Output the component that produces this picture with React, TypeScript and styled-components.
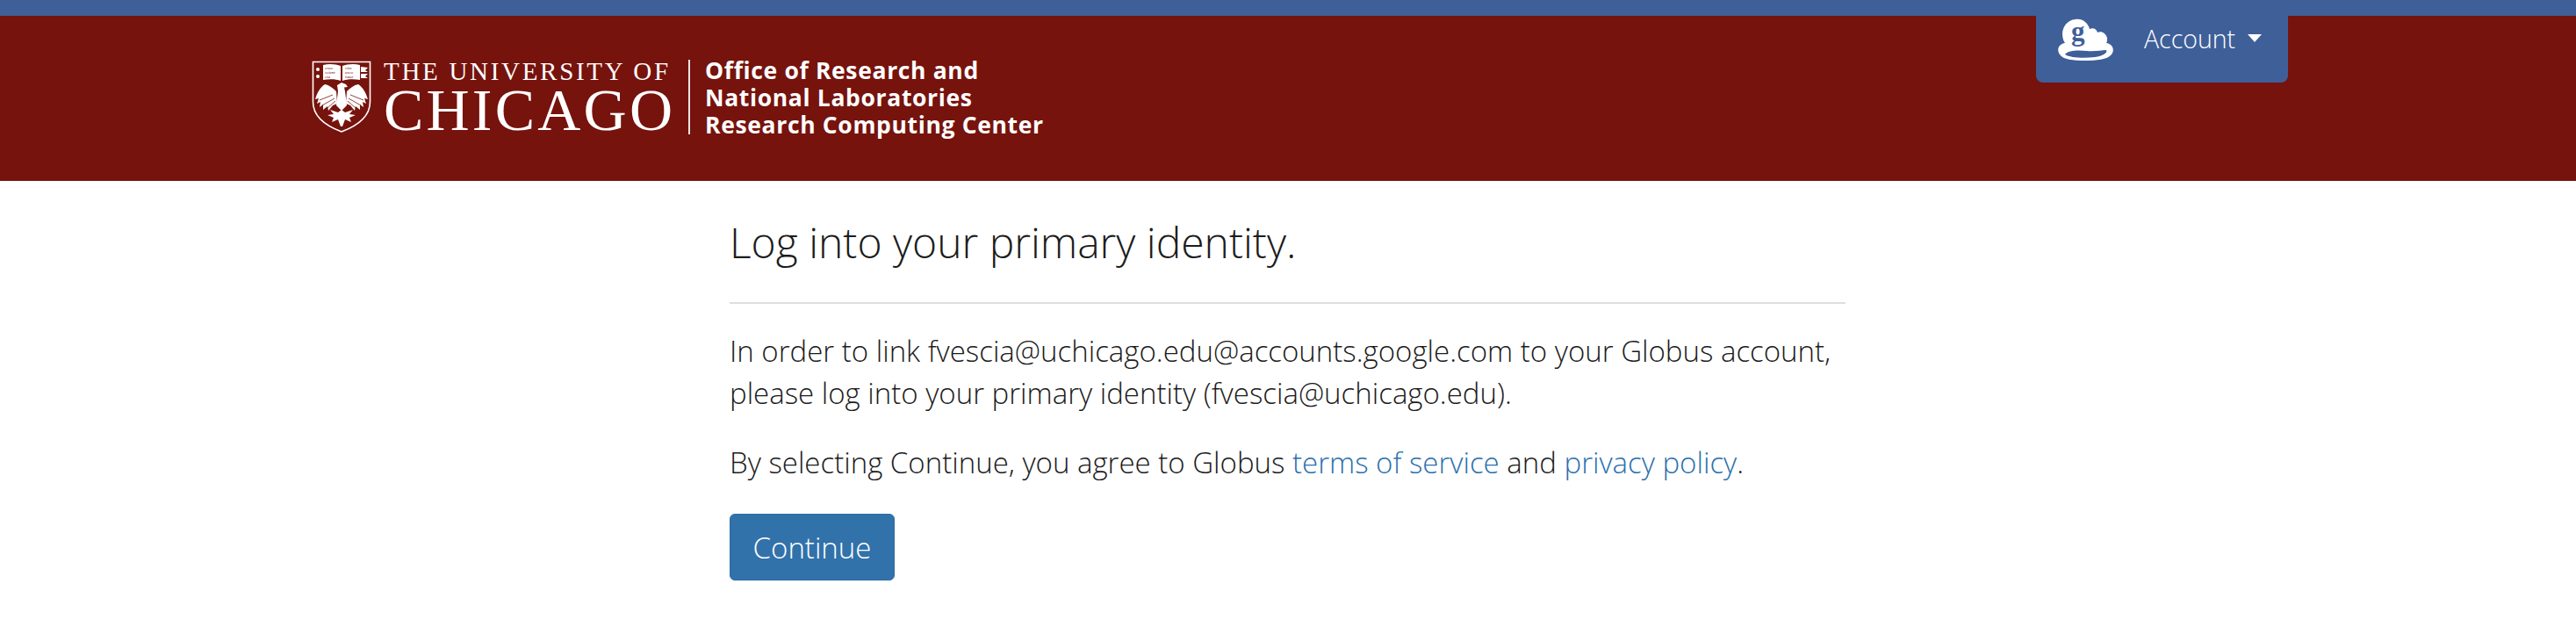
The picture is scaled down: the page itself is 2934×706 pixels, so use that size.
import styled, { createGlobalStyle } from "styled-components";

const GlobalStyle = createGlobalStyle`
  html, body {
    margin: 0;
    padding: 0;
    background: #fff;
  }
  body {
    font-family: "Open Sans", Lato, sans-serif;
    font-weight: 300;
    color: #1c1c1c;
    overflow-x: hidden;
  }
`;

const TopStrip = styled.div`
  height: 18px;
  background-color: #3f5f99;
`;

const Header = styled.header`
  display: flex;
  justify-content: space-between;
  align-items: flex-start;
  height: 188px;
  padding: 0 328px 0 355px;
  background-color: #76130d;
  color: #fff;
`;

const Brand = styled.div`
  display: flex;
  align-items: flex-start;
  padding-top: 50px;
`;

const Wordmark = styled.div`
  display: flex;
  flex-direction: column;
  width: 330px;
  margin: -2px 0 0 14px;
  font-family: "Liberation Serif", serif;
  font-weight: 400;
`;

const WordmarkTop = styled.div`
  font-size: 29px;
  line-height: 30px;
  letter-spacing: 2.7px;
  white-space: nowrap;
`;

const WordmarkBottom = styled.div`
  font-size: 68px;
  line-height: 58px;
  letter-spacing: 3.2px;
  white-space: nowrap;
`;

const Divider = styled.div`
  width: 2px;
  height: 85px;
  margin: 0 17px 0 17px;
  background-color: #f3e6e5;
`;

const Department = styled.div`
  font-family: "Open Sans", sans-serif;
  font-weight: 700;
  font-size: 26.5px;
  line-height: 31px;
  letter-spacing: 0.65px;
  margin-top: -3px;
  white-space: nowrap;
`;

const AccountMenu = styled.div`
  display: flex;
  align-items: flex-start;
  flex-shrink: 0;
  width: 287px;
  height: 76px;
  box-sizing: border-box;
  padding-left: 24px;
  background-color: #3f5f99;
  border-radius: 0 0 8px 8px;
`;

const AccountLabel = styled.span`
  margin: 7px 0 0 33px;
  font-size: 28.5px;
  line-height: 38px;
`;

const Caret = styled.span`
  width: 0;
  height: 0;
  margin: 21px 0 0 14px;
  border-top: 9px solid #fff;
  border-left: 8px solid transparent;
  border-right: 8px solid transparent;
`;

const Main = styled.main`
  width: 1271px;
  margin-left: 831px;
  padding-top: 40px;
`;

const Title = styled.h1`
  margin: 0;
  padding-bottom: 38px;
  font-size: 48px;
  line-height: 60px;
  font-weight: 300;
  border-bottom: 2px solid #dedede;
`;

const Paragraph = styled.p`
  margin: 0;
  font-size: 33px;
  line-height: 48px;
  white-space: nowrap;
`;

const Intro = styled(Paragraph)`
  margin-top: 30px;
`;

const Agreement = styled(Paragraph)`
  margin-top: 31px;
`;

const Link = styled.a`
  color: #2a70ad;
  text-decoration: none;
`;

const ContinueButton = styled.button`
  display: block;
  width: 188px;
  height: 76px;
  margin-top: 34px;
  padding: 0;
  border: 1px solid #2e6da4;
  border-radius: 6px;
  background-color: #3272aa;
  color: #fff;
  font-family: inherit;
  font-weight: 300;
  font-size: 33px;
`;

const Shield = () => (
  <svg width="68" height="84" viewBox="0 0 68 84">
    <path
      d="M1.5 2.5 H66.5 V48 C66.5 66 50 76 34 82 C18 76 1.5 66 1.5 48 Z"
      fill="none"
      stroke="#fff"
      strokeWidth="1.6"
    />
    <path d="M13 6 C20 4 28 5 33 7 V24 C28 22 20 22 13 23 Z" fill="#fff" />
    <path d="M35 7 C40 5 48 4 55 6 V23 C48 22 40 22 35 24 Z" fill="#fff" />
    <g fill="#76130d" fontFamily="Liberation Serif, serif" fontSize="5" fontStyle="italic">
      <text x="15" y="11">crea</text>
      <text x="15" y="16">scient</text>
      <text x="15" y="21">cia</text>
      <text x="38" y="11">vita</text>
      <text x="38" y="16">exco</text>
      <text x="38" y="21">latur</text>
    </g>
    <circle cx="7" cy="11" r="2" fill="#fff" />
    <circle cx="7" cy="19" r="2" fill="#fff" />
    <path d="M56 8 L64 9 L61 12 L64 14 L56 14 Z M56 16 L64 16 L61 19 L64 21 L56 21 Z" fill="#fff" />
    {/* phoenix: left wing, right wing, body, flames */}
    <path
      d="M28 36 C24 32 20 29 15 28 C10 31 6 38 4 45 L8 44 L6 50 L10 48 L9 54 L13 51 L13 57 L18 53 L19 58 L24 52 L29 50 Z"
      fill="#fff"
    />
    <path
      d="M40 36 C44 32 48 29 53 28 C58 31 62 38 64 45 L60 44 L62 50 L58 48 L59 54 L55 51 L55 57 L50 53 L49 58 L44 52 L39 50 Z"
      fill="#fff"
    />
    <path d="M29 29 L34 26 L39 28 L41 31 L37 31.5 L38 36 L40 52 L34 58 L28 52 L30 36 Z" fill="#fff" />
    <path
      d="M34 57 L38 60 L47 57 L43 62 L50 63 L43 66 L45 71 L38 68 L35 76 L33 76 L30 68 L23 71 L25 66 L18 63 L25 62 L21 57 L30 60 Z"
      fill="#fff"
    />
    <path
      d="M9 46 L24 40 M12 52 L26 44 M18 55 L27 47 M59 46 L44 40 M56 52 L42 44 M50 55 L41 47"
      stroke="#76130d"
      strokeWidth="0.8"
      fill="none"
    />
  </svg>
);

const GlobusLogo = () => (
  <svg width="66" height="54" viewBox="0 -4 66 54">
    <path
      d="M3 40 C-1 34 2 28 9 27 C2 16 8 1 21 0 C29 -1 35 4 37 11 C41 9 45 11 46 15 C50 13 55 15 57 21 C57 24 57 26 56 27 C63 28 66 34 62 40 C57 46 45 47 32 47 C18 47 7 46 3 40 Z"
      fill="#fff"
    />
    <path
      d="M9 40 C13 35 24 35 34 36 C43 37 50 35 56 35 C58 38 52 42 43 43 C31 44.5 15 44 9 40 Z"
      fill="#3f5f99"
    />
    <text
      x="16"
      y="24"
      fill="#3f5f99"
      fontFamily="Liberation Serif, serif"
      fontWeight="700"
      fontSize="31"
    >
      g
    </text>
  </svg>
);

export default function App() {
  return (
    <>
      <GlobalStyle />
      <TopStrip />
      <Header>
        <Brand>
          <Shield />
          <Wordmark>
            <WordmarkTop>THE UNIVERSITY OF</WordmarkTop>
            <WordmarkBottom>CHICAGO</WordmarkBottom>
          </Wordmark>
          <Divider />
          <Department>
            Office of Research and
            <br />
            National Laboratories
            <br />
            Research Computing Center
          </Department>
        </Brand>
        <AccountMenu>
          <GlobusLogo />
          <AccountLabel>Account</AccountLabel>
          <Caret />
        </AccountMenu>
      </Header>
      <Main>
        <Title>Log into your primary identity.</Title>
        <Intro>
          In order to link fvescia@uchicago.edu@accounts.google.com to your Globus account,
          <br />
          please log into your primary identity (fvescia@uchicago.edu).
        </Intro>
        <Agreement>
          By selecting Continue, you agree to Globus <Link href="#">terms of service</Link> and{" "}
          <Link href="#">privacy policy</Link>.
        </Agreement>
        <ContinueButton>Continue</ContinueButton>
      </Main>
    </>
  );
}
